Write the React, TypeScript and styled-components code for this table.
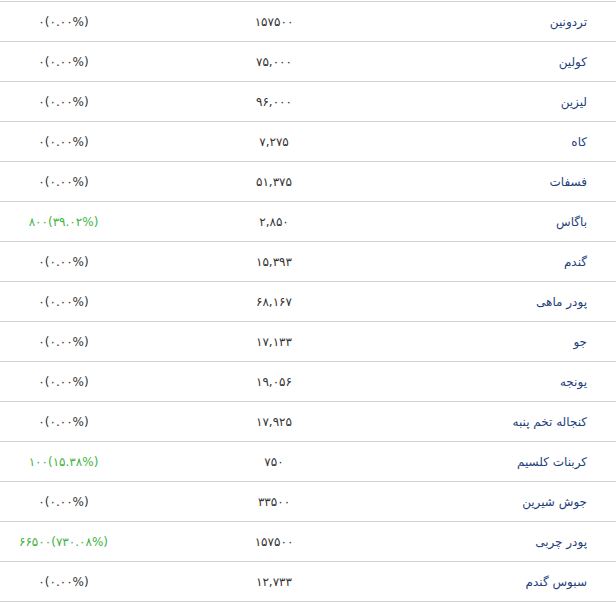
import styled, { createGlobalStyle } from "styled-components";

const ROWS = [
  { name: "تردونین", price: "۱۵۷۵۰۰", change: "۰(۰.۰۰%)", up: false },
  { name: "کولین", price: "۷۵,۰۰۰", change: "۰(۰.۰۰%)", up: false },
  { name: "لیزین", price: "۹۶,۰۰۰", change: "۰(۰.۰۰%)", up: false },
  { name: "کاه", price: "۷,۲۷۵", change: "۰(۰.۰۰%)", up: false },
  { name: "فسفات", price: "۵۱,۳۷۵", change: "۰(۰.۰۰%)", up: false },
  { name: "باگاس", price: "۲,۸۵۰", change: "۸۰۰(۳۹.۰۲%)", up: true },
  { name: "گندم", price: "۱۵,۳۹۳", change: "۰(۰.۰۰%)", up: false },
  { name: "پودر ماهی", price: "۶۸,۱۶۷", change: "۰(۰.۰۰%)", up: false },
  { name: "جو", price: "۱۷,۱۳۳", change: "۰(۰.۰۰%)", up: false },
  { name: "یونجه", price: "۱۹,۰۵۶", change: "۰(۰.۰۰%)", up: false },
  { name: "کنجاله تخم پنبه", price: "۱۷,۹۲۵", change: "۰(۰.۰۰%)", up: false },
  { name: "کربنات کلسیم", price: "۷۵۰", change: "۱۰۰(۱۵.۳۸%)", up: true },
  { name: "جوش شیرین", price: "۳۳۵۰۰", change: "۰(۰.۰۰%)", up: false },
  { name: "پودر چربی", price: "۱۵۷۵۰۰", change: "۶۶۵۰۰(۷۳۰.۰۸%)", up: true },
  { name: "سبوس گندم", price: "۱۲,۷۳۳", change: "۰(۰.۰۰%)", up: false },
];

const GlobalStyle = createGlobalStyle`
  body {
    margin: 0;
    background: #fff;
    font-family: "DejaVu Sans", "Noto Sans", sans-serif;
  }
`;

function App() {
  return (
    <>
      <GlobalStyle />
      <Table>
        {ROWS.map((row) => (
          <Row key={row.name}>
            <Name>{row.name}</Name>
            <Price>{row.price}</Price>
            <Change $up={row.up}>{row.change}</Change>
          </Row>
        ))}
      </Table>
    </>
  );
}

export default App;

const Table = styled.div`
  direction: rtl;
  margin-top: 1px;
  border-bottom: 1px solid #d3d3d3;
`;

const Row = styled.div`
  display: grid;
  grid-template-columns: 196px 295px 125px;
  align-items: center;
  height: 39px;
  border-top: 1px solid #d3d3d3;
  font-size: 12px;
`;

const Name = styled.div`
  padding-right: 29px;
  text-align: right;
  color: #1f3f7d;
`;

const Price = styled.div`
  text-align: center;
  color: #333;
  direction: ltr;
  letter-spacing: 3px;
  padding-left: 3px;
`;

const Change = styled.div<{ $up: boolean }>`
  text-align: center;
  direction: ltr;
  unicode-bidi: isolate;
  letter-spacing: 2px;
  padding-left: 2px;
  color: ${(props) => (props.$up ? "#3fb33f" : "#333")};
`;
